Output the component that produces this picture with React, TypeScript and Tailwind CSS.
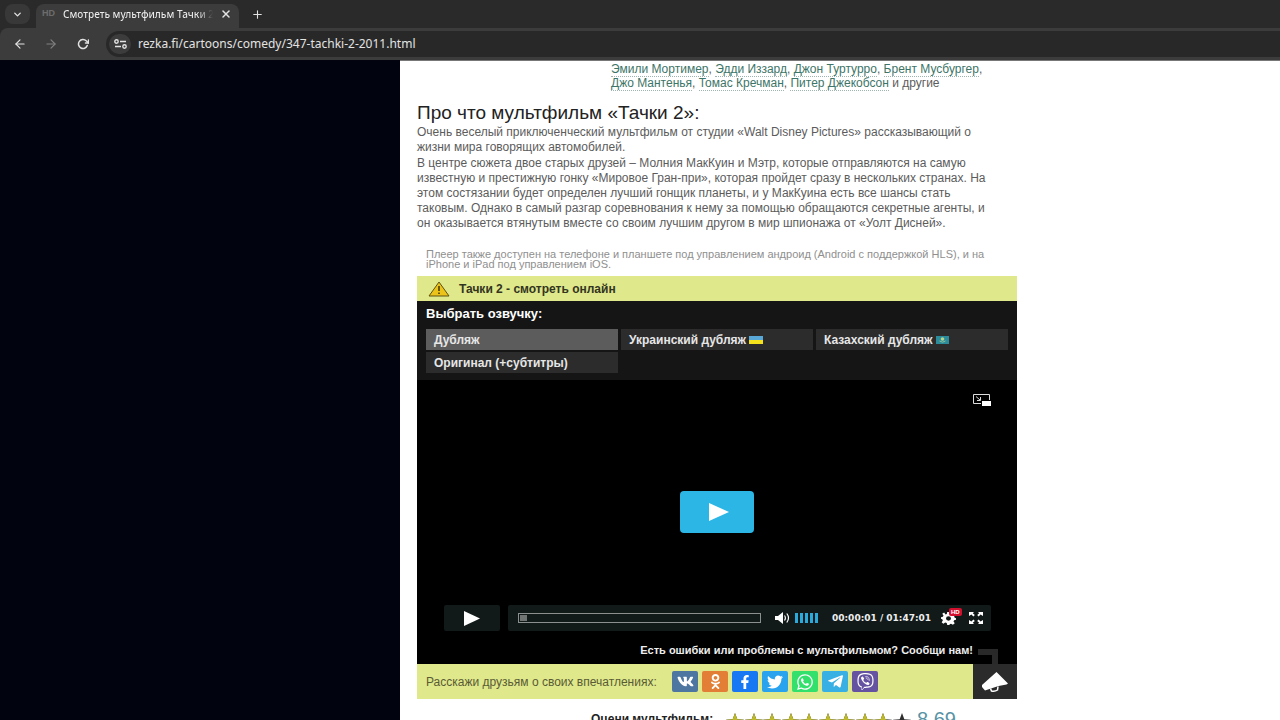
import React from 'react';
import { FiArrowLeft, FiArrowRight, FiChevronDown, FiPlus, FiRotateCw, FiX } from 'react-icons/fi';
import {
  FaFacebookF,
  FaOdnoklassniki,
  FaTelegramPlane,
  FaTwitter,
  FaViber,
  FaVk,
  FaWhatsapp,
} from 'react-icons/fa';

const cast = [
  ['Эмили Мортимер', 'Эдди Иззард', 'Джон Туртурро', 'Брент Мусбургер'],
  ['Джо Мантенья', 'Томас Кречман', 'Питер Джекобсон'],
];

const intro = [
  'Очень веселый приключенческий мультфильм от студии «Walt Disney Pictures» рассказывающий о',
  'жизни мира говорящих автомобилей.',
];

const plot = [
  'В центре сюжета двое старых друзей – Молния МакКуин и Мэтр, которые отправляются на самую',
  'известную и престижную гонку «Мировое Гран-при», которая пройдет сразу в нескольких странах. На',
  'этом состязании будет определен лучший гонщик планеты, и у МакКуина есть все шансы стать',
  'таковым. Однако в самый разгар соревнования к нему за помощью обращаются секретные агенты, и',
  'он оказывается втянутым вместе со своим лучшим другом в мир шпионажа от «Уолт Дисней».',
];

const note = [
  'Плеер также доступен на телефоне и планшете под управлением андроид (Android с поддержкой HLS), и на',
  'iPhone и iPad под управлением iOS.',
];

const voices = [
  { name: 'Дубляж', active: true },
  { name: 'Украинский дубляж', flag: <FlagUa /> },
  { name: 'Казахский дубляж', flag: <FlagKz /> },
  { name: 'Оригинал (+субтитры)' },
];

const socials = [
  { name: 'ВКонтакте', color: 'bg-[#4d76a1]', icon: <FaVk size={17} /> },
  { name: 'Одноклассники', color: 'bg-[#e27e35]', icon: <FaOdnoklassniki size={15} /> },
  { name: 'Facebook', color: 'bg-[#1877f2]', icon: <FaFacebookF size={14} /> },
  { name: 'Twitter', color: 'bg-[#2aa3ef]', icon: <FaTwitter size={16} /> },
  { name: 'WhatsApp', color: 'bg-[#33e06c]', icon: <FaWhatsapp size={18} /> },
  { name: 'Telegram', color: 'bg-[#38b0e3]', icon: <FaTelegramPlane size={17} /> },
  { name: 'Viber', color: 'bg-[#6553a1]', icon: <FaViber size={17} /> },
];

function FlagUa() {
  return (
    <svg width="14" height="8" viewBox="0 0 14 8" aria-hidden="true">
      <rect width="14" height="4" fill="#58a9d8" />
      <rect y="4" width="14" height="4" fill="#f4e21c" />
    </svg>
  );
}

function FlagKz() {
  return (
    <svg width="13" height="8" viewBox="0 0 13 8" aria-hidden="true">
      <rect width="13" height="8" fill="#2c8c9c" />
      <circle cx="6.5" cy="3" r="1.8" fill="#b9d488" />
      <path d="M3.5 5q3 2.4 6 0" stroke="#8cc39a" fill="none" />
    </svg>
  );
}

function Lines({ lines }: { lines: string[] }) {
  return (
    <>
      {lines.map((line) => (
        <span key={line} className="block whitespace-nowrap">
          {line}
        </span>
      ))}
    </>
  );
}

function Browser() {
  return (
    <header className="shrink-0 bg-[#2a2a2a] font-['Noto_Sans',sans-serif] text-[#e3e3e3]">
      <div className="flex h-7 items-center pl-[5px]">
        <button aria-label="Поиск вкладок" className="flex h-5 w-[25px] items-center justify-center rounded-lg bg-[#383838]">
          <FiChevronDown size={11} strokeWidth={3} />
        </button>
        <div className="ml-[6px] flex h-6 w-[203px] items-center self-end rounded-t-lg bg-[#3c3c3c] pb-1 pl-[6px]">
          <span className="w-[21px] font-['Liberation_Sans',sans-serif] text-[9px] font-bold text-[#6c6c6c]">HD</span>
          <span className="w-[150px] overflow-hidden whitespace-nowrap bg-linear-to-r from-[#ececec] from-90% to-[#3c3c3c] bg-clip-text text-[10px] font-medium text-transparent">
            Смотреть мультфильм Тачки 2
          </span>
          <button aria-label="Закрыть вкладку" className="ml-[7px]">
            <FiX size={12} strokeWidth={3} />
          </button>
        </div>
        <button aria-label="Новая вкладка" className="ml-3">
          <FiPlus size={13} strokeWidth={2} />
        </button>
      </div>
      <div className="flex h-8 items-center rounded-tl-lg bg-[#3c3c3c] pl-[13px]">
        <button aria-label="Назад">
          <FiArrowLeft size={14} strokeWidth={2} />
        </button>
        <button aria-label="Вперёд" className="ml-[17px] text-[#808080]">
          <FiArrowRight size={14} strokeWidth={2} />
        </button>
        <button aria-label="Обновить" className="ml-[19px]">
          <FiRotateCw size={12} strokeWidth={3} />
        </button>
        <div className="ml-[17px] flex h-[26px] flex-1 items-center rounded-l-full bg-[#282828] pl-[3px]">
          <button aria-label="Сведения о сайте" className="flex h-5 w-[22px] items-center justify-center rounded-full bg-[#3c3c3c]">
            <svg width="13" height="10" viewBox="0 0 13 10" fill="none" stroke="currentColor" strokeWidth="1.4">
              <circle cx="2.5" cy="2.5" r="1.7" />
              <path d="M6 2.5h6M1 7.5h6" />
              <circle cx="10.5" cy="7.5" r="1.7" />
            </svg>
          </button>
          <input
            aria-label="Адрес"
            readOnly
            value="rezka.fi/cartoons/comedy/347-tachki-2-2011.html"
            className="ml-[7px] flex-1 bg-transparent text-[12px] outline-none"
          />
        </div>
      </div>
    </header>
  );
}

function Controls() {
  return (
    <div className="mt-[72px] mr-[26px] ml-[27px] flex h-[26px] gap-2">
      <button aria-label="Воспроизвести" className="flex w-14 items-center justify-center rounded-[2px] bg-[#111a19]">
        <svg width="16" height="15" viewBox="0 0 16 15" fill="#fff">
          <path d="M0 0l16 7.5L0 15z" />
        </svg>
      </button>
      <div className="flex flex-1 items-center rounded-[2px] bg-[#111a19] pr-2 pl-[10px]">
        <div className="h-[10px] flex-1 border border-[#8b908f] p-px">
          <div className="h-full w-[7px] bg-[#707574]" />
        </div>
        <button aria-label="Громкость" className="ml-[14px]">
          <svg width="15" height="12" viewBox="0 0 15 12" fill="#fff">
            <path d="M0 4h3l5-4v12L3 8H0z" />
            <path d="M9.5 3.5q1.8 2.5 0 5M11.8 1.5q3.4 4.500 0 9" fill="none" stroke="#fff" strokeWidth="1.2" />
          </svg>
        </button>
        <div className="ml-[5px] flex gap-[2px]">
          {[1, 2, 3, 4, 5].map((bar) => (
            <span key={bar} className="h-[10px] w-[3px] bg-[#2ba9da]" />
          ))}
        </div>
        <span className="ml-[14px] w-[100px] whitespace-nowrap font-['DejaVu_Sans',sans-serif] text-[9px] leading-[10px] font-bold text-[#eee]">
          00:00:01 / 01:47:01
        </span>
        <button aria-label="Настройки" className="relative ml-[9px]">
          <svg width="15" height="13" viewBox="0 0 24 24" preserveAspectRatio="none" fill="#fff">
            <path
              fillRule="evenodd"
              d="M10 0h4l.7 3.500 2.500 1L20.200 2.500 23 5.300l-2 3 1 2.500 2 .7v3l-3 .7-1 2.500 2 3-3 2.800-3-2-2.500 1L14 24h-4l-.8-3.500-2.500-1-3 2L1 18.700l2-3-1-2.500-2-.7v-3l3-.7 1-2.500-2-3L5 .8l2.300 3.700 2-1zM12 8a4 4 0 100 8 4 4 0 000-8z"
            />
          </svg>
          <span className="absolute -top-1 left-2 rounded-[2px] bg-[#d3112f] px-[2px] text-[6px] leading-[8px] font-bold text-white">
            HD
          </span>
        </button>
        <button aria-label="На весь экран" className="ml-[13px]">
          <svg width="14" height="12" viewBox="0 0 14 12" fill="#fff">
            <path d="M0 0h5L3.800 1.200l2 1.800-1.400 1.400-2-2L0 4zM14 0H9l1.200 1.200-2 1.800 1.400 1.400 2-2L14 4zM0 12h5l-1.200-1.200 2-1.800-1.400-1.400-2 2L0 8zM14 12H9l1.200-1.200-2-1.800 1.400-1.400 2 2L14 8z" />
          </svg>
        </button>
      </div>
    </div>
  );
}

function Player() {
  return (
    <div className="bg-black pt-[14px]">
      <div className="flex justify-end pr-[26px]">
        <button aria-label="Картинка в картинке">
          <svg width="18" height="12" viewBox="0 0 18 12" fill="none" stroke="#ddd">
            <path d="M8 9.500H.5v-9h16V6" />
            <path d="M3 2.500l4 3.500M7.500 3v3.500H4" />
            <path d="M9 7h9v5H9z" fill="#fff" stroke="none" />
          </svg>
        </button>
      </div>
      <div className="mt-[85px] flex justify-center">
        <button aria-label="Смотреть" className="flex h-[42px] w-[74px] items-center justify-center rounded-[4px] bg-[#2cb6e6] pl-1">
          <svg width="20" height="18" viewBox="0 0 20 18" fill="#fff">
            <path d="M0 0l20 9L0 18z" />
          </svg>
        </button>
      </div>
      <Controls />
      <div className="flex h-[33px] items-center justify-end pt-[6px] pr-[19px]">
        <a href="#report" className="text-[11px] font-bold whitespace-nowrap text-[#eee]">
          Есть ошибки или проблемы с мультфильмом? Сообщи нам!
        </a>
        <span className="ml-[5px] h-[15px] w-5 self-end border-t-[6px] border-r-[6px] border-[#292929]" />
      </div>
    </div>
  );
}

const STAR = 'M10 0l2.600 6.500 7.400.5-5.600 4.700 1.700 7.100L10 15l-6.100 3.800 1.700-7.100L0 7l7.400-.5z';

// `value` is the filled share of the star, 0..1
function Star({ value }: { value: number }) {
  return (
    <svg width="18" height="18" viewBox="0 0 20 19" preserveAspectRatio="none">
      <path d={STAR} fill="#2e2e2e" />
      <path d={STAR} fill="#bdb928" style={{ clipPath: `inset(0 ${(1 - value) * 100}% 0 0)` }} />
    </svg>
  );
}

export default function App() {
  const rating = 8.69;

  return (
    <div className="flex h-screen flex-col overflow-hidden bg-[#02050f] font-['Liberation_Sans',Arial,sans-serif]">
      <Browser />
      <div className="flex min-h-0 flex-1">
        <aside className="w-[400px] shrink-0 bg-[#01040e]" />
        <main className="flex-1 overflow-hidden border-t border-[#777] bg-white pl-[17px]">
          <div className="w-[600px] text-[#5c5c5c]">
            <div className="pt-px pl-[194px] text-[12px] leading-[14px]">
              {cast.map((row, index) => (
                <p key={row[0]} className="whitespace-nowrap">
                  {row.map((actor, i) => (
                    <React.Fragment key={actor}>
                      <a href="#actor" className="border-b border-dotted border-[#9db5ae] text-[#3d7568]">
                        {actor}
                      </a>
                      {i < row.length - 1 && ', '}
                    </React.Fragment>
                  ))}
                  {index === 0 ? ',' : ' и другие'}
                </p>
              ))}
            </div>

            <h2 className="mt-[11px] text-[19px] leading-6 text-[#222]">Про что мультфильм «Тачки 2»:</h2>
            <p className="text-[12px] leading-[15px]">
              <Lines lines={intro} />
            </p>
            <p className="mt-px text-[12px] leading-[15px]">
              <Lines lines={plot} />
            </p>
            <p className="mt-[18px] pl-[9px] text-[11px] leading-[10px] text-[#8f8f8f]">
              <Lines lines={note} />
            </p>

            <section className="mt-[7px]">
              <div className="flex h-[25px] items-center bg-[#dfe88b] pl-[11px]">
                <svg width="22" height="16" viewBox="0 0 22 16" aria-hidden="true">
                  <path d="M11 1L21 15H1z" fill="#ecc419" stroke="#5f5212" strokeLinejoin="round" />
                  <path d="M11 5v5M11 11.500v1.500" stroke="#3b330e" strokeWidth="1.500" />
                </svg>
                <h3 className="ml-[9px] text-[12px] font-bold text-[#33351f]">Тачки 2 - смотреть онлайн</h3>
              </div>
              <div className="bg-[#151515] px-[9px] pt-[5px] pb-[7px]">
                <div className="text-[13px] leading-4 font-bold text-white">Выбрать озвучку:</div>
                <div className="mt-[7px] grid grid-cols-3 gap-x-[3px] gap-y-[2px]">
                  {voices.map((voice) => (
                    <button
                      key={voice.name}
                      className={`flex h-[21px] items-center gap-[3px] px-2 text-[12px] font-bold whitespace-nowrap text-[#e6e6e6] ${
                        voice.active ? 'bg-[#5c5c5c]' : 'bg-[#2c2c2c]'
                      }`}
                    >
                      {voice.name}
                      {voice.flag}
                    </button>
                  ))}
                </div>
              </div>
              <Player />
              <div className="flex h-[35px] items-center bg-[#dfe88b] pl-[9px]">
                <span className="w-[246px] text-[12px] whitespace-nowrap text-[#5a5b35]">
                  Расскажи друзьям о своих впечатлениях:
                </span>
                <div className="flex gap-1">
                  {socials.map((social) => (
                    <a
                      key={social.name}
                      href="#share"
                      aria-label={social.name}
                      className={`flex h-[21px] w-[26px] items-center justify-center rounded-[2px] text-white ${social.color}`}
                    >
                      {social.icon}
                    </a>
                  ))}
                </div>
                <button aria-label="Сообщить" className="ml-auto flex h-full w-11 items-center justify-center bg-[#2b2b2b]">
                  <svg width="28" height="22" viewBox="0 0 28 22" fill="#fff">
                    <path d="M15.500 1L27 12.500l-1.500 1-8 1.500L4 19.500l-3-3.500V14z" />
                    <path d="M9.500 17.500l1 2.500q3.500.8 6-1l.5-3.500" fill="none" stroke="#fff" strokeWidth="1.500" />
                  </svg>
                </button>
              </div>
            </section>

            <div className="mt-[10px] flex h-5 items-center pl-[174px] whitespace-nowrap">
              <span className="w-[135px] text-[12px] font-bold text-[#222]">Оцени мультфильм:</span>
              <div className="flex w-[185px] justify-between pt-[5px]">
                {Array.from({ length: 10 }, (_, i) => (
                  <Star key={i} value={Math.min(1, Math.max(0, rating - i))} />
                ))}
              </div>
              <span className="ml-[6px] text-[20px]  text-[#5793a6]">{rating}</span>
            </div>
          </div>
        </main>
      </div>
    </div>
  );
}
